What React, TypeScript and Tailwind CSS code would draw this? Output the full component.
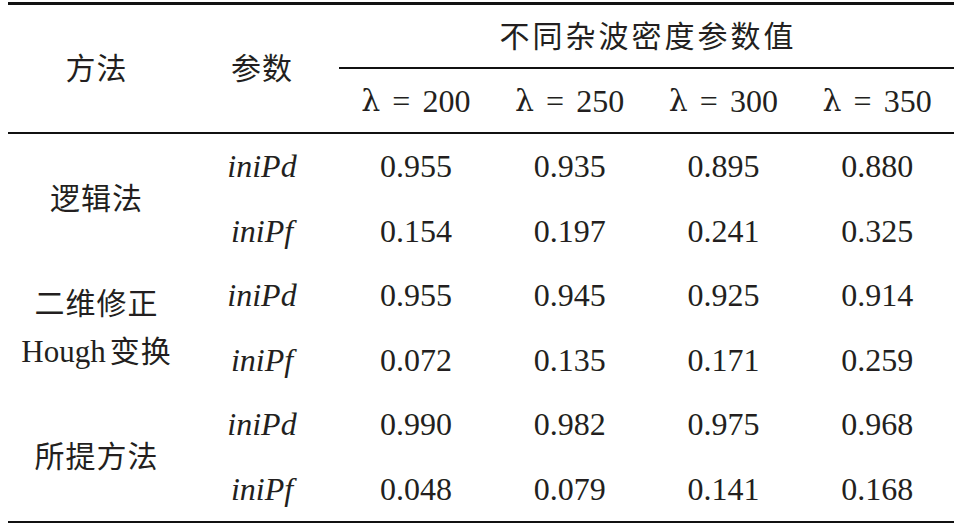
import React from "react";

const serif = "font-['Liberation_Serif','Noto_Sans_CJK_SC',serif]";

const rows = [
  { p: "Pd", v: ["0.955", "0.935", "0.895", "0.880"] },
  { p: "Pf", v: ["0.154", "0.197", "0.241", "0.325"] },
  { p: "Pd", v: ["0.955", "0.945", "0.925", "0.914"] },
  { p: "Pf", v: ["0.072", "0.135", "0.171", "0.259"] },
  { p: "Pd", v: ["0.990", "0.982", "0.975", "0.968"] },
  { p: "Pf", v: ["0.048", "0.079", "0.141", "0.168"] },
];

function Lambda({ n }: { n: string }) {
  return (
    <div className="flex items-center justify-center text-[32px] leading-none">
      <span className="font-['DejaVu_Serif',serif] text-[30px]">λ</span>
      <span className="mx-[12px]">=</span>
      <span>{n}</span>
    </div>
  );
}

export default function App() {
  return (
    <div className={`w-[954px] h-[523px] bg-white pl-2 pt-[2px] text-[#231f20] ${serif}`}>
      {/* header */}
      <div className="border-t-[3px] border-b-2 border-[#111] grid grid-cols-[177px_154px_1fr] h-[132px]">
        <div className="flex items-center justify-center text-[30px] tracking-[1px]">方法</div>
        <div className="flex items-center justify-center text-[30px] tracking-[1px]">参数</div>
        <div className="flex flex-col">
          <div className="h-[62px] flex items-center justify-center text-[30px] tracking-[3px] pl-[3px]">
            不同杂波密度参数值
          </div>
          <div className="border-t-2 border-[#111] flex-1 grid grid-cols-4">
            <Lambda n="200" />
            <Lambda n="250" />
            <Lambda n="300" />
            <Lambda n="350" />
          </div>
        </div>
      </div>
      {/* body */}
      <div className="border-b-2 border-[#111] grid grid-cols-[177px_154px_repeat(4,1fr)] grid-rows-[repeat(6,64.5px)]">
        <div className="row-start-1 row-span-2 col-start-1 flex items-center justify-center text-[30px] tracking-[1px]">
          逻辑法
        </div>
        <div className="row-start-3 row-span-2 col-start-1 flex flex-col items-center justify-center text-[30px] leading-[48px] tracking-[1px]">
          <div>二维修正</div>
          <div>
            <span className="text-[31px] mr-[4px] tracking-normal">Hough</span>变换
          </div>
        </div>
        <div className="row-start-5 row-span-2 col-start-1 flex items-center justify-center text-[30px] tracking-[1px]">
          所提方法
        </div>
        {rows.map((r, i) => (
          <React.Fragment key={i}>
            <div
              className="col-start-2 flex items-center justify-center text-[32px] italic"
              style={{ gridRowStart: i + 1 }}
            >
              iniP{r.p === "Pd" ? "d" : "f"}
            </div>
            {r.v.map((v, j) => (
              <div
                key={j}
                className="flex items-center justify-center text-[32px]"
                style={{ gridRowStart: i + 1, gridColumnStart: j + 3 }}
              >
                {v}
              </div>
            ))}
          </React.Fragment>
        ))}
      </div>
    </div>
  );
}
